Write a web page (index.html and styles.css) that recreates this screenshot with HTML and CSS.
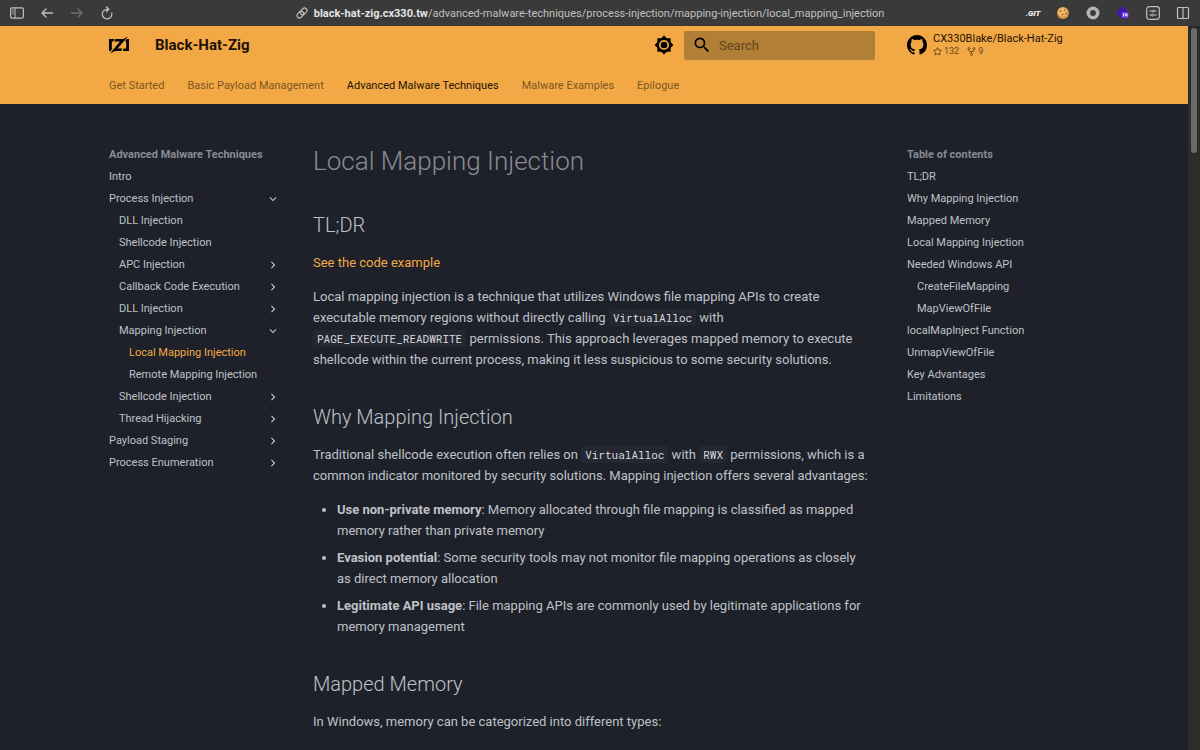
FILE: index.html
```html
<!DOCTYPE html>
<html lang="en">
<head>
    <meta charset="UTF-8">
    <meta name="viewport" content="width=device-width, initial-scale=1.0">
    <title>Local Mapping Injection - Black-Hat-Zig</title>
    <link rel="stylesheet" href="styles.css">
</head>
<body>
    <!-- shared icons -->
    <svg class="sprite" aria-hidden="true">
        <symbol id="chevron" viewBox="0 0 24 24"><path d="M8.59 16.58 13.17 12 8.59 7.41 10 6l6 6-6 6-1.41-1.42Z"/></symbol>
    </svg>

    <div class="browser">
        <div class="toolbar">
            <div class="tools tools-left">
                <button type="button" aria-label="Sidebar"><svg width="14" height="12" viewBox="0 0 14 12" fill="none" stroke="currentColor"><rect x=".6" y=".8" width="12.8" height="10.4" rx="1.5" stroke-width="1.2"/><path d="M5 1v10M2.2 3.2h1.4M2.2 5h1.4M2.2 6.8h1.4"/></svg></button>
                <button type="button" aria-label="Back"><svg width="14" height="12" viewBox="0 0 14 12" fill="none" stroke="currentColor" stroke-width="1.3" stroke-linecap="round" stroke-linejoin="round"><path d="M12.5 6H2M6 2 2 6l4 4"/></svg></button>
                <button type="button" aria-label="Forward" disabled><svg width="14" height="12" viewBox="0 0 14 12" fill="none" stroke="currentColor" stroke-width="1.3" stroke-linecap="round" stroke-linejoin="round"><path d="M1.5 6H12M8 2l4 4-4 4"/></svg></button>
                <button type="button" aria-label="Reload"><svg width="14" height="14" viewBox="0 0 14 14" fill="none" stroke="currentColor" stroke-width="1.3" stroke-linecap="round" stroke-linejoin="round"><path d="M11.8 7.2A4.8 4.8 0 1 1 7 3.3h1.5M6.5 1l2.3 2.3-2.3 2.2"/></svg></button>
            </div>
            <div class="address">
                <svg width="12" height="12" viewBox="0 0 12 12" fill="none" stroke="currentColor" stroke-width="1.1"><g transform="rotate(-45 6 6)"><rect x="0" y="3.6" width="7.4" height="4.8" rx="2.4"/><rect x="4.6" y="3.6" width="7.4" height="4.8" rx="2.4"/></g></svg>
                <span><b>black-hat-zig.cx330.tw</b>/advanced-malware-techniques/process-injection/mapping-injection/local_mapping_injection</span>
            </div>
            <div class="tools tools-right">
                <button type="button" class="git">.GIT</button>
                <button type="button" aria-label="Cookies"><svg width="14" height="14" viewBox="0 0 14 14"><circle cx="7" cy="7" r="6" fill="#d9984a"/><circle cx="6.5" cy="6" r="4.6" fill="#efb968"/><g fill="#754018"><circle cx="4.5" cy="5" r=".8"/><circle cx="8.7" cy="4" r=".7"/><circle cx="6.5" cy="8.5" r=".8"/><circle cx="10" cy="7.5" r=".8"/></g></svg></button>
                <button type="button" aria-label="Recorder"><svg width="14" height="14" viewBox="0 0 14 14" fill="none" stroke="#b4b4b4" stroke-width="3.6"><circle cx="7" cy="7" r="4.7"/></svg></button>
                <button type="button" aria-label="Extension, 14"><svg width="14" height="14" viewBox="0 0 14 14"><path d="M6.5 0 12 5.5v3L7 13 .5 8V6z" fill="#4117a5"/><rect x="5.5" y="6" width="7" height="6" rx="1" fill="#6a35e8"/><path d="M7.6 7.5v3M9.4 7.5v1.7h1.7M10.9 7.5v3" stroke="#fff" fill="none"/></svg></button>
                <button type="button" aria-label="Settings"><svg width="14" height="14" viewBox="0 0 14 14" fill="none" stroke="currentColor"><rect x=".7" y=".7" width="12.6" height="12.6" rx="2.5" stroke-width="1.2"/><path d="M3.5 5h3M8.5 5h2M3.5 9h2M7.5 9h3"/><circle cx="7.5" cy="5" r="1"/><circle cx="6.5" cy="9" r="1"/></svg></button>
                <button type="button" aria-label="Split view"><svg width="14" height="14" viewBox="0 0 14 14" fill="none" stroke="currentColor" stroke-width="1.2"><rect x="1.5" y="1.5" width="11" height="11" rx="1"/><path d="M7 2v10"/></svg></button>
            </div>
        </div>

        <div class="viewport">
            <div class="page">
                <header class="header">
                    <div class="header-row">
                        <a class="logo" href="#" aria-label="Black-Hat-Zig"><svg width="20" height="18" viewBox="0 0 20 18"><path d="M0 3h5.5L4 5.5H2.8v7h.7L1.6 15H0zM20 3h-2.2l-2 2.5h1.4v7h-2.3L13.5 15H20zM6.500 3h8L19 .5 8.500 12.500h5L12 15H6L1 17.500 11 5.500H5z"/></svg></a>
                        <a class="site-title" href="#">Black-Hat-Zig</a>
                        <button type="button" class="palette" aria-label="Switch theme"><svg width="20" height="20" viewBox="0 0 24 24"><path d="M12 8a4 4 0 0 0-4 4 4 4 0 0 0 4 4 4 4 0 0 0 4-4 4 4 0 0 0-4-4m0 10a6 6 0 0 1-6-6 6 6 0 0 1 6-6 6 6 0 0 1 6 6 6 6 0 0 1-6 6m8-9.310V4h-4.690L12 .69 8.690 4H4v4.690L.69 12 4 15.310V20h4.690L12 23.310 15.310 20H20v-4.690L23.310 12 20 8.690Z"/></svg></button>
                        <form class="search">
                            <svg width="20" height="20" viewBox="0 0 24 24"><path d="M9.500 3A6.500 6.500 0 0 1 16 9.500c0 1.610-.59 3.090-1.560 4.230l.27.27h.79l5 5-1.500 1.500-5-5v-.79l-.27-.27A6.516 6.516 0 0 1 9.500 16 6.500 6.500 0 0 1 3 9.500 6.500 6.500 0 0 1 9.500 3m0 2C7 5 5 7 5 9.500S7 14 9.500 14 14 12 14 9.500 12 5 9.500 5Z"/></svg>
                            <input type="text" placeholder="Search" aria-label="Search">
                        </form>
                        <a class="repo" href="#">
                            <svg width="20" height="20" viewBox="0 0 16 16"><path d="M8 0C3.580 0 0 3.580 0 8c0 3.540 2.290 6.530 5.470 7.590.4.07.55-.17.55-.38 0-.19-.01-.82-.01-1.490-2.010.37-2.530-.49-2.690-.94-.09-.23-.48-.94-.82-1.130-.28-.15-.68-.52-.01-.53.63-.01 1.080.58 1.230.82.72 1.210 1.870.87 2.330.66.07-.52.28-.87.51-1.070-1.780-.2-3.640-.89-3.640-3.950 0-.87.31-1.590.82-2.150-.08-.2-.36-1.020.08-2.120 0 0 .67-.21 2.200.82.64-.18 1.320-.27 2-.27s1.360.09 2 .27c1.530-1.040 2.200-.82 2.200-.82.44 1.100.16 1.920.08 2.120.51.56.82 1.270.82 2.150 0 3.070-1.870 3.750-3.650 3.950.29.25.54.73.54 1.480 0 1.070-.01 1.930-.01 2.200 0 .21.15.46.55.38A8.010 8.010 0 0 0 16 8c0-4.420-3.580-8-8-8Z"/></svg>
                            <span class="repo-text">
                                <span class="repo-name">CX330Blake/Black-Hat-Zig</span>
                                <span class="facts">
                                    <span class="fact"><svg width="9" height="9" viewBox="0 0 16 16" fill="none" stroke="currentColor" stroke-width="1.6" stroke-linejoin="round"><path d="m8 1 2.100 4.400 4.900.7-3.500 3.400.8 4.800L8 12l-4.300 2.300.8-4.800L1 6.100l4.900-.7z"/></svg>132</span>
                                    <span class="fact"><svg width="9" height="9" viewBox="0 0 16 16" fill="none" stroke="currentColor" stroke-width="1.6"><circle cx="3.5" cy="2.8" r="1.8"/><circle cx="12.5" cy="2.8" r="1.8"/><circle cx="8" cy="13.2" r="1.8"/><path d="M3.500 4.600V6q0 2 2 2h5q2 0 2-2V4.600M8 8v3.400"/></svg>9</span>
                                </span>
                            </span>
                        </a>
                    </div>
                    <nav class="tabs">
                        <a href="#">Get Started</a>
                        <a href="#">Basic Payload Management</a>
                        <a href="#" class="active">Advanced Malware Techniques</a>
                        <a href="#">Malware Examples</a>
                        <a href="#">Epilogue</a>
                    </nav>
                </header>

                <div class="main">
                    <nav class="sidebar">
                        <h4>Advanced Malware Techniques</h4>
                        <ul>
                            <li><a href="#">Intro</a></li>
                            <li><a href="#">Process Injection<svg class="chevron open"><use href="#chevron"/></svg></a>
                                <ul>
                                    <li><a href="#">DLL Injection</a></li>
                                    <li><a href="#">Shellcode Injection</a></li>
                                    <li><a href="#">APC Injection<svg class="chevron"><use href="#chevron"/></svg></a></li>
                                    <li><a href="#">Callback Code Execution<svg class="chevron"><use href="#chevron"/></svg></a></li>
                                    <li><a href="#">DLL Injection<svg class="chevron"><use href="#chevron"/></svg></a></li>
                                    <li><a href="#">Mapping Injection<svg class="chevron open"><use href="#chevron"/></svg></a>
                                        <ul>
                                            <li><a href="#" class="active">Local Mapping Injection</a></li>
                                            <li><a href="#">Remote Mapping Injection</a></li>
                                        </ul>
                                    </li>
                                    <li><a href="#">Shellcode Injection<svg class="chevron"><use href="#chevron"/></svg></a></li>
                                    <li><a href="#">Thread Hijacking<svg class="chevron"><use href="#chevron"/></svg></a></li>
                                </ul>
                            </li>
                            <li><a href="#">Payload Staging<svg class="chevron"><use href="#chevron"/></svg></a></li>
                            <li><a href="#">Process Enumeration<svg class="chevron"><use href="#chevron"/></svg></a></li>
                        </ul>
                    </nav>

                    <article class="content">
                        <h1>Local Mapping Injection</h1>

                        <h2 id="tldr">TL;DR</h2>
                        <p><a href="#">See the code example</a></p>
                        <p>Local mapping injection is a technique that utilizes Windows file mapping APIs to create executable memory regions without directly calling <code>VirtualAlloc</code> with <code>PAGE_EXECUTE_READWRITE</code> permissions. This approach leverages mapped memory to execute shellcode within the current process, making it less suspicious to some security solutions.</p>

                        <h2 id="why">Why Mapping Injection</h2>
                        <p>Traditional shellcode execution often relies on <code>VirtualAlloc</code> with <code>RWX</code> permissions, which is a common indicator monitored by security solutions. Mapping injection offers several advantages:</p>
                        <ul>
                            <li><strong>Use non-private memory</strong>: Memory allocated through file mapping is classified as mapped memory rather than private memory</li>
                            <li><strong>Evasion potential</strong>: Some security tools may not monitor file mapping operations as closely as direct memory allocation</li>
                            <li><strong>Legitimate API usage</strong>: File mapping APIs are commonly used by legitimate applications for memory management</li>
                        </ul>

                        <h2 id="mapped">Mapped Memory</h2>
                        <p>In Windows, memory can be categorized into different types:</p>
                    </article>

                    <nav class="sidebar toc">
                        <h4>Table of contents</h4>
                        <ul>
                            <li><a href="#tldr">TL;DR</a></li>
                            <li><a href="#why">Why Mapping Injection</a></li>
                            <li><a href="#mapped">Mapped Memory</a></li>
                            <li><a href="#">Local Mapping Injection</a></li>
                            <li><a href="#">Needed Windows API</a>
                                <ul>
                                    <li><a href="#">CreateFileMapping</a></li>
                                    <li><a href="#">MapViewOfFile</a></li>
                                </ul>
                            </li>
                            <li><a href="#">localMapInject Function</a></li>
                            <li><a href="#">UnmapViewOfFile</a></li>
                            <li><a href="#">Key Advantages</a></li>
                            <li><a href="#">Limitations</a></li>
                        </ul>
                    </nav>
                </div>
            </div>
            <div class="scrollbar"><div class="thumb"></div></div>
        </div>
    </div>
</body>
</html>
```
FILE: styles.css
```css
* {
    box-sizing: border-box;
}

body {
    margin: 0;
    background: #1e2129;
    color: #bfc1c8;
    font-family: Roboto, sans-serif;
    font-size: 13px;
    line-height: 21px;
}

a {
    color: inherit;
    text-decoration: none;
}

button {
    padding: 0;
    border: none;
    background: none;
    color: inherit;
    font: inherit;
    cursor: pointer;
}

svg {
    display: block;
    flex: none;
}

.sprite {
    display: none;
}

.browser {
    display: flex;
    flex-direction: column;
    height: 100vh;
}

/* browser toolbar */
.toolbar {
    display: flex;
    flex: none;
    justify-content: space-between;
    align-items: center;
    height: 26px;
    padding: 0 10px;
    background: #3a3a3a;
    color: #c0c0c0;
}

.tools {
    display: flex;
    flex: 1;
    align-items: center;
    gap: 16px;
}

.tools-right {
    justify-content: flex-end;
}

.tools button {
    display: flex;
    justify-content: center;
    width: 14px;
}

.tools button:disabled {
    color: #707070;
}

.tools .git {
    color: #f0f0f0;
    font-size: 8px;
    font-style: italic;
    font-weight: 900;
}

.address {
    display: flex;
    align-items: center;
    gap: 6px;
    margin-right: 20px;
    font-size: 11px;
}

.address b {
    color: #e4e4e4;
    font-weight: 700;
}

.viewport {
    display: flex;
    flex: 1;
    min-height: 0;
}

.page {
    flex: 1;
    overflow: hidden;
}

.scrollbar {
    width: 12px;
    padding: 2px 3px;
    background: #2c2c2c;
}

.thumb {
    height: 125px;
    border-radius: 3px;
    background: #6b6b6b;
}

/* header */
.header {
    height: 78px;
    background: #f2a945;
    color: #1c1206;
}

.header-row,
.tabs,
.main {
    max-width: 990px;
    margin: 0 auto;
}

.header-row {
    display: flex;
    align-items: center;
    height: 38px;
    padding-left: 10px;
}

.site-title {
    flex: 1;
    margin-left: 26px;
    font-size: 15px;
    font-weight: 700;
}

.palette {
    margin-right: 10px;
}

.search {
    display: flex;
    align-items: center;
    width: 191px;
    height: 29px;
    padding-left: 8px;
    gap: 7px;
    border-radius: 2px;
    background: #b27f36;
}

.search input {
    flex: 1;
    min-width: 0;
    padding: 0;
    border: none;
    outline: none;
    background: none;
    color: inherit;
    font: inherit;
}

.search input::placeholder {
    color: #5f421b;
    opacity: 1;
}

.repo {
    display: flex;
    align-items: center;
    gap: 6px;
    width: 182px;
    margin-left: 32px;
}

.repo-text {
    font-size: 11px;
    line-height: 13px;
}

.repo-name {
    display: block;
}

.facts {
    display: flex;
    gap: 8px;
    color: #63451c;
    font-size: 9px;
}

.fact {
    display: flex;
    align-items: center;
    gap: 2px;
}

.tabs {
    display: flex;
    gap: 23px;
    padding: 11px 10px;
    color: #7b5623;
    font-size: 11px;
}

.tabs .active {
    color: #1c1206;
}

/* three columns */
.main {
    display: grid;
    grid-template-columns: 196px 1fr 196px;
    padding-top: 40px;
}

.sidebar {
    padding: 0 15px 0 10px;
    font-size: 11px;
    line-height: 22px;
}

.sidebar h4 {
    margin: 0;
    color: #898b93;
    font-size: 11px;
    font-weight: 700;
}

.sidebar ul {
    margin: 0;
    padding: 0;
    list-style: none;
}

.sidebar ul ul {
    padding-left: 10px;
}

.sidebar a {
    display: flex;
    justify-content: space-between;
    align-items: center;
    white-space: nowrap;
}

.sidebar .active,
.content a {
    color: #f2a945;
}

.chevron {
    width: 14px;
    height: 14px;
    fill: currentColor;
}

.chevron.open {
    transform: rotate(90deg);
}

.content {
    padding: 0 22px 0 18px;
}

.content h1,
.content h2 {
    font-weight: 300;
}

.content h1 {
    margin: 0;
    color: #898b93;
    font-size: 26px;
    line-height: 34px;
}

.content h2 {
    margin: 33px 0 13px;
    font-size: 20px;
    line-height: 28px;
}

.content p,
.content ul {
    margin: 0 0 13px;
}

.content ul {
    padding-left: 24px;
}

.content li + li {
    margin-top: 6px;
}

.content code {
    padding: 1px 4px;
    border-radius: 1px;
    background: #252830;
    color: #d8dae0;
    font-family: "Roboto Mono", "DejaVu Sans Mono", monospace;
    font-size: 11px;
}

.toc {
    padding: 0 0 0 14px;
}
```
